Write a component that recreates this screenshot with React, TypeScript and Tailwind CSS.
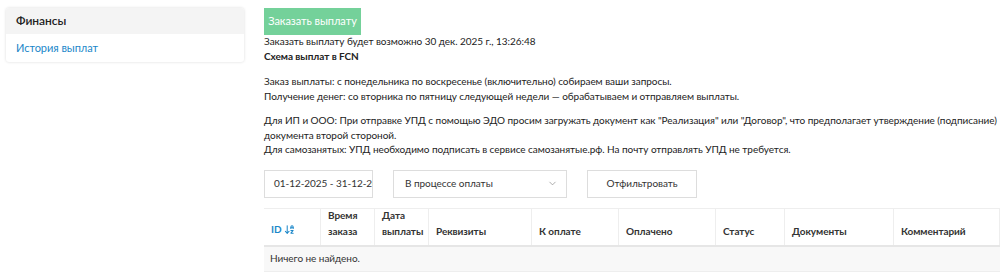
import { ArrowDownAZ, ChevronDown } from "lucide-react"

const COLUMNS: { label: string[]; w: string }[] = [
  { label: ["Время", "заказа"], w: "w-[54px]" },
  { label: ["Дата", "выплаты"], w: "w-[54px]" },
  { label: ["Реквизиты"], w: "w-[103px]" },
  { label: ["К оплате"], w: "w-[87px]" },
  { label: ["Оплачено"], w: "w-[97px]" },
  { label: ["Статус"], w: "w-[69px]" },
  { label: ["Документы"], w: "w-[109px]" },
  { label: ["Комментарий"], w: "flex-1" }
]

export default function App() {
  return (
    <div
      className="w-[1000px] h-[273px] bg-white text-[#222] text-[10px] leading-[14.5px] tracking-[-0.05px] flex overflow-hidden"
      style={{ fontFamily: "Lato, 'Noto Sans', sans-serif" }}>
      {/* Sidebar */}
      <div className="w-[264px] shrink-0 pl-[6px] pr-[20px] pt-[8px]">
        <div className="rounded-[3px] shadow-[0_0_3px_rgba(0,0,0,0.15)] overflow-hidden">
          <div className="h-[26px] bg-[#f4f4f4] px-[10px] flex items-center text-[12px] font-semibold text-[#222]">
            Финансы
          </div>
          <div className="h-[28px] px-[10px] flex items-center text-[11px] text-[#1b87c9]">
            История выплат
          </div>
        </div>
      </div>

      {/* Main */}
      <div className="flex-1 pt-[8px] min-w-0">
        <button className="h-[27px] w-[97px] bg-[#74d19a] text-white text-[11px]">
          Заказать выплату
        </button>
        <div className="-mt-[1px]">Заказать выплату будет возможно 30 дек. 2025 г., 13:26:48</div>
        <div className="font-bold">Схема выплат в FCN</div>
        <div className="mt-[11px]">
          Заказ выплаты: с понедельника по воскресенье (включительно) собираем ваши запросы.
        </div>
        <div>Получение денег: со вторника по пятницу следующей недели — обрабатываем и отправляем выплаты.</div>
        <div className="mt-[10px] pr-[2px]">
          Для ИП и ООО: При отправке УПД с помощью ЭДО просим загружать документ как "Реализация" или "Договор", что предполагает утверждение (подписание) документа второй стороной.
        </div>
        <div>Для самозанятых: УПД необходимо подписать в сервисе самозанятые.рф. На почту отправлять УПД не требуется.</div>

        {/* Filters */}
        <div className="flex gap-[20px] mt-[13px]">
          <div className="w-[109px] h-[28px] border border-[#ddd] px-[9px] flex items-center overflow-hidden whitespace-nowrap text-[#333]">
            01-12-2025 - 31-12-2025
          </div>
          <div className="w-[174px] h-[28px] border border-[#ddd] pl-[11px] pr-[8px] flex items-center justify-between text-[#333]">
            <span>В процессе оплаты</span>
            <ChevronDown className="w-[11px] h-[11px] text-[#888]" strokeWidth={1.5} />
          </div>
          <div className="w-[110px] h-[28px] border border-[#ddd] flex items-center justify-center text-[#333]">
            Отфильтровать
          </div>
        </div>

        {/* Table */}
        <div className="mt-[10px] border-t border-[#eee]">
          <div className="flex h-[38px] border-b-[2px] border-[#e6e6e6] font-bold text-[#333]">
            <div className="w-[57px] flex items-end pb-[8px] pl-[7px] gap-[3px] text-[#1b87c9] border-r border-[#eee]">
              <span>ID</span>
              <ArrowDownAZ className="w-[11px] h-[11px] mb-[2px]" strokeWidth={2.2} />
            </div>
            {COLUMNS.map((c, i) => (
              <div
                key={i}
                className={`${c.w} flex flex-col justify-end pb-[6px] pl-[7px] border-r border-[#eee] leading-[16px]`}>
                {c.label.map((l) => (
                  <span key={l}>{l}</span>
                ))}
              </div>
            ))}
          </div>
          <div className="h-[25px] bg-[#f8f8f8] border-b border-[#eee] flex items-center pl-[6px] text-[#333]">
            Ничего не найдено.
          </div>
        </div>
      </div>
    </div>
  )
}
